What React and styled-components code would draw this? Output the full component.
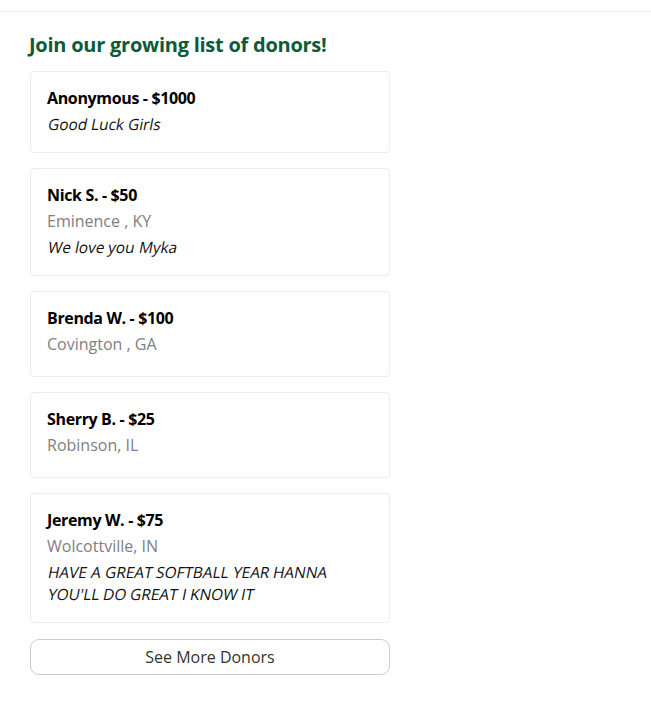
import React from "react";
import styled, { createGlobalStyle } from "styled-components";

const GlobalStyle = createGlobalStyle`
  body {
    margin: 0;
    font-family: "Open Sans", "Noto Sans", sans-serif;
    background: #ffffff;
    color: #111111;
  }
`;

const TopBar = styled.div`
  height: 11px;
  border-bottom: 1px solid #ebebeb;
`;

const Section = styled.section`
  padding: 19px 30px 20px 30px;
  width: 360px;
`;

const Title = styled.h2`
  margin: 0 0 13px -1px;
  font-size: 20px;
  line-height: 27px;
  font-weight: 700;
  letter-spacing: -0.25px;
  color: #0d5a3a;
`;

const List = styled.div`
  display: flex;
  flex-direction: column;
  gap: 15px;
`;

const Card = styled.div`
  border: 1px solid #ececec;
  border-radius: 4px;
  padding: 13px 16px 17px;
`;

const Name = styled.div`
  font-size: 16px;
  line-height: 26px;
  font-weight: 700;
  letter-spacing: -0.35px;
  color: #000000;
`;

const Location = styled.div`
  font-size: 16px;
  line-height: 26px;
  color: #808080;
  margin-bottom: 2px;
`;

const Message = styled.div`
  font-size: 15.4px;
  line-height: 22px;
  color: #111111;
  margin-top: 2px;
`;

// the original shows a slanted regular face rather than the true italic
const Word = styled.span`
  display: inline-block;
  transform: translateY(1px) skewX(-11deg);
  transform-origin: 0 78%;
`;

const MoreButton = styled.button`
  display: block;
  width: 100%;
  margin-top: 16px;
  height: 36px;
  background: #ffffff;
  border: 1px solid #cccccc;
  border-radius: 9px;
  font-family: "Open Sans", "Noto Sans", sans-serif;
  font-size: 16px;
  color: #333333;
  cursor: pointer;
`;

const donors = [
  { name: "Anonymous - $1000", message: "Good Luck Girls" },
  { name: "Nick S. - $50", location: "Eminence , KY", message: "We love you Myka" },
  { name: "Brenda W. - $100", location: "Covington , GA" },
  { name: "Sherry B. - $25", location: "Robinson, IL" },
  {
    name: "Jeremy W. - $75",
    location: "Wolcottville, IN",
    message: "HAVE A GREAT SOFTBALL YEAR HANNA YOU'LL DO GREAT I KNOW IT",
  },
];

const Slanted = ({ text }) => {
  const words = text.split(" ");
  return words.map((w, i) => (
    <React.Fragment key={i}>
      <Word>{w}</Word>
      {i < words.length - 1 ? " " : null}
    </React.Fragment>
  ));
};

const App = () => {
  return (
    <>
      <GlobalStyle />
      <TopBar />
      <Section>
        <Title>Join our growing list of donors!</Title>
        <List>
          {donors.map((d) => (
            <Card key={d.name}>
              <Name>{d.name}</Name>
              {d.location && <Location>{d.location}</Location>}
              {d.message && (
                <Message>
                  <Slanted text={d.message} />
                </Message>
              )}
            </Card>
          ))}
        </List>
        <MoreButton type="button">See More Donors</MoreButton>
      </Section>
    </>
  );
};

export default App;
